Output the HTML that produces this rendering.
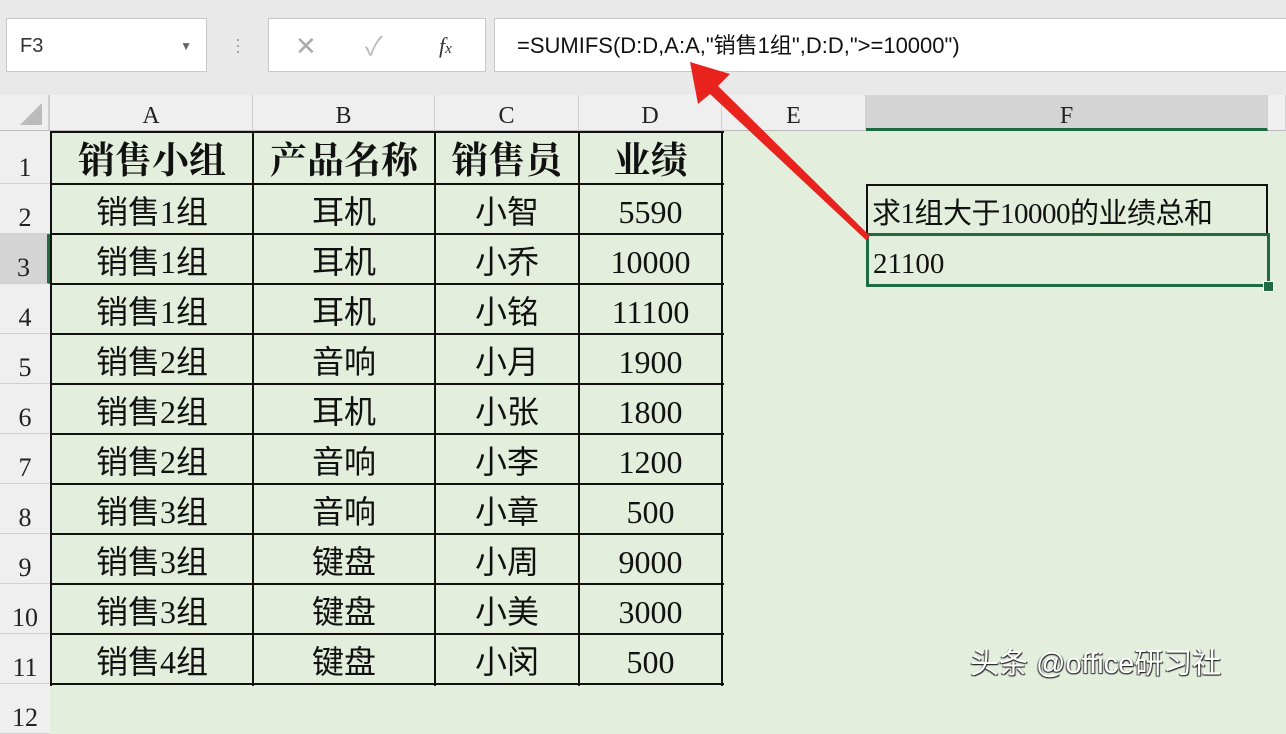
<!DOCTYPE html>
<html><head><meta charset="utf-8"><style>
body{margin:0;width:1286px;height:698px;overflow:hidden;background:#e3efdc;position:relative;font-family:"Liberation Sans","Noto Sans CJK SC",sans-serif}
.top{position:absolute;left:0;top:0;width:1286px;height:95px;background:#e9e9e9}
.box{position:absolute;background:#fff;border:1px solid #c8c8c8;box-sizing:border-box}
.colh{position:absolute;top:95px;height:36px;background:#efefef;border-right:1px solid #cfcfcf;box-sizing:border-box;text-align:center;font:24px "Liberation Serif","Noto Serif CJK SC",serif;line-height:42px;color:#222;border-bottom:1px solid #bbb}
.rowh{position:absolute;left:0;width:50px;background:#efefef;border-bottom:1px solid #cfcfcf;box-sizing:border-box;font:26px "Liberation Serif",serif;color:#222;text-align:center;display:flex;align-items:flex-end;justify-content:center}
.c{position:absolute;text-align:center;font-family:"Liberation Serif","Noto Sans CJK SC",sans-serif;font-size:32px;color:#111;height:50px;line-height:56px;white-space:nowrap}
.hl{position:absolute;left:50px;width:674px;height:2px;background:#111}
.vl{position:absolute;top:131px;width:2px;height:555px;background:#111}
.h{font-family:"Liberation Serif","Noto Serif CJK SC",serif;font-weight:bold;font-size:37px;height:53px;line-height:62px}
</style></head><body>
<div class="top"></div>
<div class="box" style="left:6px;top:18px;width:201px;height:54px;font-size:20px;line-height:54px;padding-left:13px;color:#333">F3<span style="position:absolute;right:14px;top:0;font-size:12px;color:#666">▼</span></div>
<div style="position:absolute;left:235px;top:36px;color:#999;font-size:18px;line-height:6px">·<br>·<br>·</div>
<div class="box" style="left:268px;top:18px;width:218px;height:54px;color:#aaa;font-size:26px;line-height:54px">
<span style="position:absolute;left:26px">✕</span><span style="position:absolute;left:96px;color:#bbb">✓</span><span style="position:absolute;left:170px;color:#333;font-family:'Liberation Serif',serif;font-style:italic;font-size:22px">f<span style="font-size:15px">x</span></span></div>
<div class="box" style="left:494px;top:18px;width:800px;height:54px;font-size:22px;line-height:54px;padding-left:22px;color:#111">=SUMIFS(D:D,A:A,"销售1组",D:D,"&gt;=10000")</div>

<div class="colh" style="left:0;width:50px;border-right:2px solid #ccc"><div style="position:absolute;right:6px;bottom:5px;width:0;height:0;border-left:22px solid transparent;border-bottom:22px solid #bbb"></div></div>
<div class="colh" style="left:50px;width:203px">A</div>
<div class="colh" style="left:253px;width:182px">B</div>
<div class="colh" style="left:435px;width:144px">C</div>
<div class="colh" style="left:579px;width:143px">D</div>
<div class="colh" style="left:722px;width:144px">E</div>
<div class="colh" style="left:866px;width:402px;background:#d4d4d4;border-bottom:3px solid #1e6b42">F</div>
<div class="colh" style="left:1268px;width:18px"></div>

<div class="rowh" style="top:131px;height:53px">1</div>
<div class="rowh" style="top:184px;height:50px">2</div>
<div class="rowh" style="top:234px;height:50px;background:#d4d4d4;border-right:3px solid #1e6b42">3</div>
<div class="rowh" style="top:284px;height:50px">4</div>
<div class="rowh" style="top:334px;height:50px">5</div>
<div class="rowh" style="top:384px;height:50px">6</div>
<div class="rowh" style="top:434px;height:50px">7</div>
<div class="rowh" style="top:484px;height:50px">8</div>
<div class="rowh" style="top:534px;height:50px">9</div>
<div class="rowh" style="top:584px;height:50px">10</div>
<div class="rowh" style="top:634px;height:50px">11</div>
<div class="rowh" style="top:684px;height:50px">12</div>

<div class="hl" style="top:131px"></div><div class="hl" style="top:183px"></div><div class="hl" style="top:233px"></div><div class="hl" style="top:283px"></div><div class="hl" style="top:333px"></div><div class="hl" style="top:383px"></div><div class="hl" style="top:433px"></div><div class="hl" style="top:483px"></div><div class="hl" style="top:533px"></div><div class="hl" style="top:583px"></div><div class="hl" style="top:633px"></div><div class="hl" style="top:683px"></div>
<div class="vl" style="left:50px"></div><div class="vl" style="left:252px"></div><div class="vl" style="left:434px"></div><div class="vl" style="left:578px"></div><div class="vl" style="left:721px"></div>

<div class="c h" style="left:52px;width:200px;top:131px">销售小组</div>
<div class="c h" style="left:254px;width:180px;top:131px">产品名称</div>
<div class="c h" style="left:436px;width:142px;top:131px">销售员</div>
<div class="c h" style="left:580px;width:141px;top:131px">业绩</div>

<div class="c" style="left:52px;width:200px;top:184px">销售1组</div><div class="c" style="left:254px;width:180px;top:184px">耳机</div><div class="c" style="left:436px;width:142px;top:184px">小智</div><div class="c" style="left:580px;width:141px;top:184px">5590</div>
<div class="c" style="left:52px;width:200px;top:234px">销售1组</div><div class="c" style="left:254px;width:180px;top:234px">耳机</div><div class="c" style="left:436px;width:142px;top:234px">小乔</div><div class="c" style="left:580px;width:141px;top:234px">10000</div>
<div class="c" style="left:52px;width:200px;top:284px">销售1组</div><div class="c" style="left:254px;width:180px;top:284px">耳机</div><div class="c" style="left:436px;width:142px;top:284px">小铭</div><div class="c" style="left:580px;width:141px;top:284px">11100</div>
<div class="c" style="left:52px;width:200px;top:334px">销售2组</div><div class="c" style="left:254px;width:180px;top:334px">音响</div><div class="c" style="left:436px;width:142px;top:334px">小月</div><div class="c" style="left:580px;width:141px;top:334px">1900</div>
<div class="c" style="left:52px;width:200px;top:384px">销售2组</div><div class="c" style="left:254px;width:180px;top:384px">耳机</div><div class="c" style="left:436px;width:142px;top:384px">小张</div><div class="c" style="left:580px;width:141px;top:384px">1800</div>
<div class="c" style="left:52px;width:200px;top:434px">销售2组</div><div class="c" style="left:254px;width:180px;top:434px">音响</div><div class="c" style="left:436px;width:142px;top:434px">小李</div><div class="c" style="left:580px;width:141px;top:434px">1200</div>
<div class="c" style="left:52px;width:200px;top:484px">销售3组</div><div class="c" style="left:254px;width:180px;top:484px">音响</div><div class="c" style="left:436px;width:142px;top:484px">小章</div><div class="c" style="left:580px;width:141px;top:484px">500</div>
<div class="c" style="left:52px;width:200px;top:534px">销售3组</div><div class="c" style="left:254px;width:180px;top:534px">键盘</div><div class="c" style="left:436px;width:142px;top:534px">小周</div><div class="c" style="left:580px;width:141px;top:534px">9000</div>
<div class="c" style="left:52px;width:200px;top:584px">销售3组</div><div class="c" style="left:254px;width:180px;top:584px">键盘</div><div class="c" style="left:436px;width:142px;top:584px">小美</div><div class="c" style="left:580px;width:141px;top:584px">3000</div>
<div class="c" style="left:52px;width:200px;top:634px">销售4组</div><div class="c" style="left:254px;width:180px;top:634px">键盘</div><div class="c" style="left:436px;width:142px;top:634px">小闵</div><div class="c" style="left:580px;width:141px;top:634px">500</div>

<div style="position:absolute;left:866px;top:184px;width:402px;height:52px;border:2px solid #111;box-sizing:border-box;font-family:'Liberation Serif','Noto Sans CJK SC',sans-serif;font-size:29px;line-height:56px;padding-left:4px;color:#111;white-space:nowrap;letter-spacing:-0.5px">求1组大于10000的业绩总和</div>
<div style="position:absolute;left:866px;top:233px;width:404px;height:54px;border:3px solid #1e6b42;box-sizing:border-box;font-family:'Liberation Serif',serif;font-size:29px;line-height:56px;padding-left:4px;color:#111">21100</div>
<div style="position:absolute;left:1263px;top:281px;width:9px;height:9px;background:#1e6b42;border:1px solid #fff"></div>

<svg style="position:absolute;left:0;top:0" width="1286" height="698"><polygon points="690,62 730,74 718,86 870,236 866,240 710,94 698,104" fill="#e8231e"/></svg>

<div style="position:absolute;left:970px;top:640px;font-size:29px;color:#fff;text-shadow:1px 1px 1px #222,-1px 1px 1px #444;white-space:nowrap">头条 @office研习社</div>
</body></html>
